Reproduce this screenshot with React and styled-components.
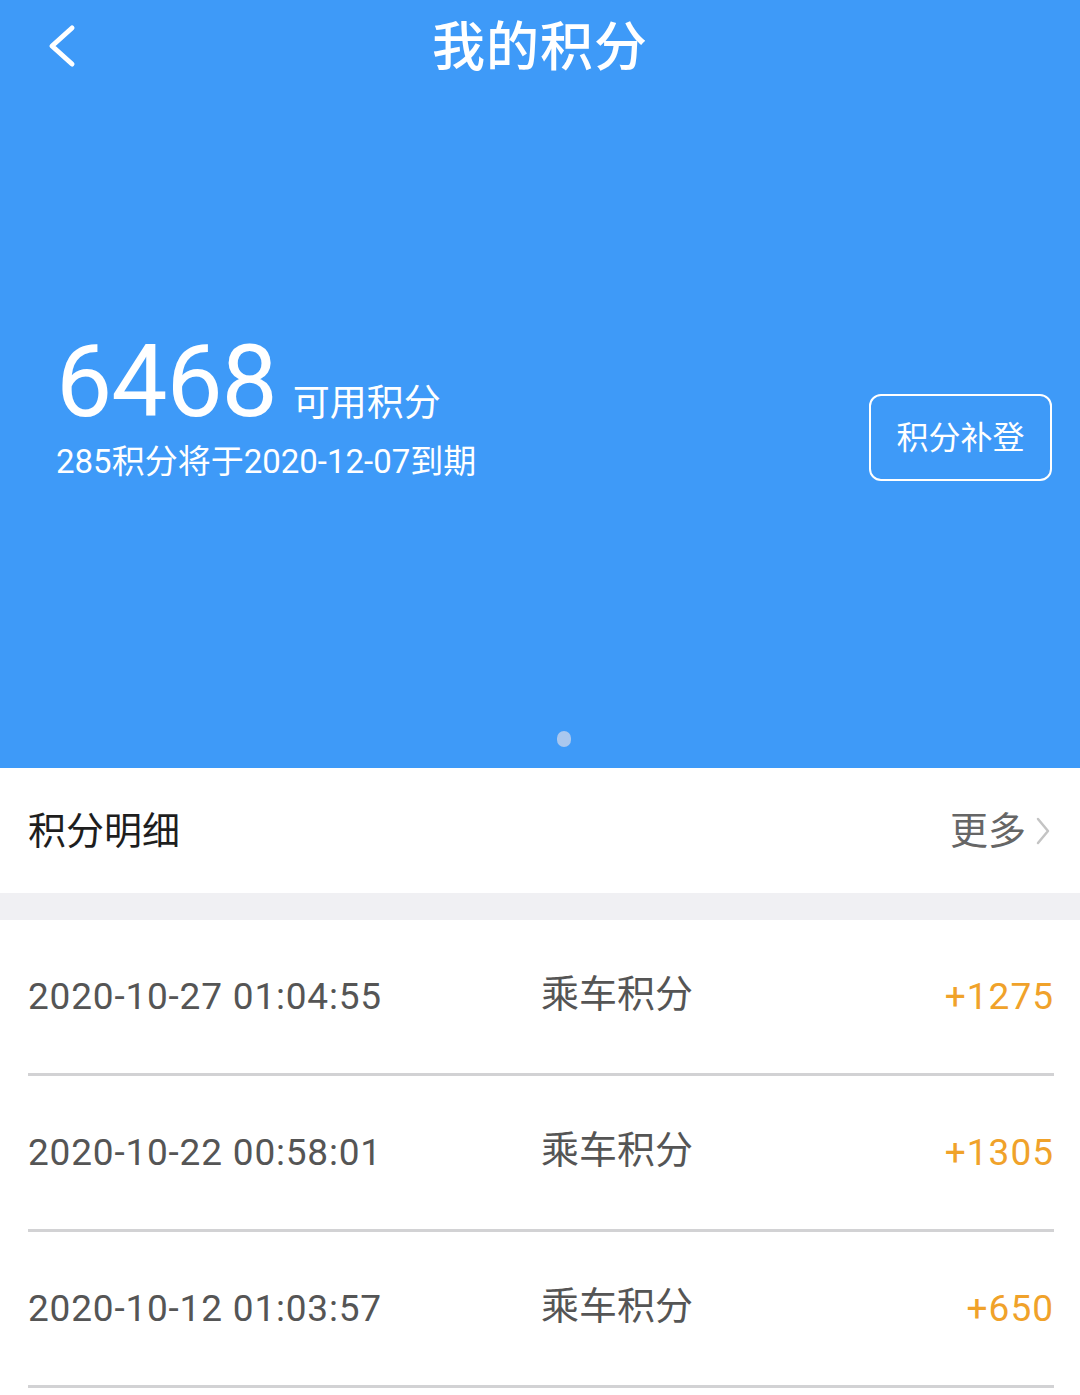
import styled, { createGlobalStyle } from "styled-components";

const GlobalStyle = createGlobalStyle`
  html, body {
    margin: 0;
    padding: 0;
    background: #ffffff;
  }
  body {
    font-family: Roboto, "Noto Sans CJK SC", "Noto Sans", sans-serif;
  }
`;

const Page = styled.div`
  width: 1080px;
  min-height: 1395px;
  background: #ffffff;
`;

const Hero = styled.header`
  height: 768px;
  background: #3e9af8;
  color: #ffffff;
  display: flex;
  flex-direction: column;
`;

const TopBar = styled.div`
  height: 96px;
  display: flex;
  align-items: center;
  justify-content: center;
  position: relative;
`;

const BackButton = styled.button`
  position: absolute;
  left: 40px;
  top: 22px;
  width: 42px;
  height: 48px;
  padding: 0;
  border: none;
  background: transparent;
  display: flex;
  align-items: center;
  justify-content: center;
  cursor: pointer;
`;

const Title = styled.h1`
  margin: 0;
  font-size: 53px;
  font-weight: 500;
  letter-spacing: 1px;
  line-height: 1;
  margin-top: 0;
`;

const Summary = styled.div`
  margin-top: 236px;
  padding: 0 28px 0 56px;
  display: flex;
  justify-content: space-between;
  align-items: flex-start;
`;

const Balance = styled.div`
  display: flex;
  flex-direction: column;
`;

const NumberRow = styled.div`
  display: flex;
  align-items: baseline;
  gap: 16px;
`;

const BigNumber = styled.span`
  font-family: Roboto, sans-serif;
  font-size: 100px;
  line-height: 100px;
  letter-spacing: -1px;
`;

const Unit = styled.span`
  font-size: 37px;
  line-height: 1;
`;

const Expire = styled.div`
  margin-top: 6px;
  font-size: 33px;
  line-height: 48px;
  letter-spacing: 0;
`;

const OutlineButton = styled.button`
  margin-top: 62px;
  width: 183px;
  height: 87px;
  border: 2px solid #ffffff;
  border-radius: 12px;
  background: transparent;
  color: #ffffff;
  font-family: "Noto Sans CJK SC", sans-serif;
  font-size: 32px;
  line-height: 1;
  padding: 0 0 6px;
  cursor: pointer;
`;

const Pager = styled.div`
  margin-top: auto;
  margin-bottom: 21px;
  display: flex;
  justify-content: center;
`;

const PagerDot = styled.span`
  width: 14px;
  height: 16px;
  border-radius: 8px;
  background: #a9c7ee;
  margin-left: 48px;
`;

const SectionHead = styled.div`
  height: 125px;
  padding: 0 28px;
  display: flex;
  align-items: center;
  justify-content: space-between;
`;

const SectionTitle = styled.h2`
  margin: 0;
  font-size: 38px;
  font-weight: 400;
  color: #1e1e1e;
  line-height: 1;
`;

const MoreLink = styled.a`
  display: flex;
  align-items: center;
  gap: 8px;
  font-size: 38px;
  color: #666666;
  text-decoration: none;
  line-height: 1;
`;

const Band = styled.div`
  height: 27px;
  background: #f0f0f3;
`;

const List = styled.ul`
  margin: 0;
  padding: 0;
  list-style: none;
`;

const Row = styled.li`
  height: 153px;
  margin: 0 26px 0 28px;
  border-bottom: 3px solid #d2d2d4;
  display: flex;
  align-items: center;
  color: #555555;
`;

const DateCell = styled.span`
  width: 513px;
  font-family: Roboto, sans-serif;
  font-size: 37px;
  letter-spacing: 0.8px;
`;

const TypeCell = styled.span`
  flex: 1;
  font-size: 38px;
  line-height: 1;
  margin-top: -6px;
`;

const AmountCell = styled.span`
  font-family: Roboto, sans-serif;
  font-size: 37px;
  color: ${(p) => p.color || "#f0a22a"};
  letter-spacing: 1px;
`;

const records = [
  { time: "2020-10-27 01:04:55", type: "乘车积分", amount: "+1275" },
  { time: "2020-10-22 00:58:01", type: "乘车积分", amount: "+1305" },
  { time: "2020-10-12 01:03:57", type: "乘车积分", amount: "+650" },
];

export default function App() {
  return (
    <>
      <GlobalStyle />
      <Page>
        <Hero>
          <TopBar>
            <BackButton aria-label="返回">
              <svg width="34" height="44" viewBox="0 0 34 44" fill="none">
                <path
                  d="M28 4 L8 22 L28 40"
                  stroke="#ffffff"
                  strokeWidth="5"
                  strokeLinecap="round"
                  strokeLinejoin="round"
                />
              </svg>
            </BackButton>
            <Title>我的积分</Title>
          </TopBar>
          <Summary>
            <Balance>
              <NumberRow>
                <BigNumber>6468</BigNumber>
                <Unit>可用积分</Unit>
              </NumberRow>
              <Expire>285积分将于2020-12-07到期</Expire>
            </Balance>
            <OutlineButton>积分补登</OutlineButton>
          </Summary>
          <Pager>
            <PagerDot />
          </Pager>
        </Hero>

        <SectionHead>
          <SectionTitle>积分明细</SectionTitle>
          <MoreLink href="#">
            更多
            <svg width="18" height="30" viewBox="0 0 18 30" fill="none">
              <path
                d="M4 3 L14 15 L4 27"
                stroke="#c4c4c4"
                strokeWidth="2.5"
                strokeLinecap="round"
                strokeLinejoin="round"
              />
            </svg>
          </MoreLink>
        </SectionHead>
        <Band />

        <List>
          {records.map((r) => (
            <Row key={r.time}>
              <DateCell>{r.time}</DateCell>
              <TypeCell>{r.type}</TypeCell>
              <AmountCell>{r.amount}</AmountCell>
            </Row>
          ))}
        </List>
      </Page>
    </>
  );
}
